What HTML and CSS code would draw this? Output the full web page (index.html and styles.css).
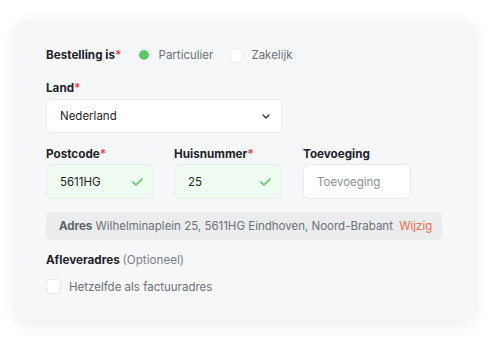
FILE: index.html
```html
<!DOCTYPE html>
<html lang="nl">
<head>
  <meta charset="UTF-8" />
  <title>Bestelling</title>
  <link rel="stylesheet" href="styles.css">
</head>
<body>

<div class="card">
  <!--  TYPE  -->
  <div class="type-row">
    <span class="label">Bestelling is<span class="req">*</span></span>
    <label class="radio"><span class="dot on"></span>Particulier</label>
    <label class="radio"><span class="dot"></span>Zakelijk</label>
  </div>

  <!--  LAND  -->
  <div class="field land">
    <span class="label">Land<span class="req">*</span></span>
    <div class="select">
      <span>Nederland</span>
      <svg width="8" height="5" viewBox="0 0 8 5"><path d="M1 1l3 3 3-3" fill="none" stroke="#333" stroke-width="1.4" stroke-linecap="round" stroke-linejoin="round"/></svg>
    </div>
  </div>

  <!--  POSTCODE / HUISNUMMER / TOEVOEGING  -->
  <div class="addr-row">
    <div class="field">
      <span class="label">Postcode<span class="req">*</span></span>
      <div class="input valid"><span>5611HG</span><svg width="11" height="8" viewBox="0 0 11 8"><path d="M1 4.2l2.9 2.8L10 1" fill="none" stroke="#5cc46b" stroke-width="1.7" stroke-linecap="round" stroke-linejoin="round"/></svg></div>
    </div>
    <div class="field">
      <span class="label">Huisnummer<span class="req">*</span></span>
      <div class="input valid"><span>25</span><svg width="11" height="8" viewBox="0 0 11 8"><path d="M1 4.2l2.9 2.8L10 1" fill="none" stroke="#5cc46b" stroke-width="1.7" stroke-linecap="round" stroke-linejoin="round"/></svg></div>
    </div>
    <div class="field">
      <span class="label">Toevoeging</span>
      <div class="input"><span class="placeholder">Toevoeging</span></div>
    </div>
  </div>

  <!--  ADRES  -->
  <div class="adres">
    <b>Adres</b> Wilhelminaplein 25, 5611HG Eindhoven, Noord-Brabant <a class="edit">Wijzig</a>
  </div>

  <!--  AFLEVERADRES  -->
  <div class="label deliver">Afleveradres <span class="opt">(Optioneel)</span></div>
  <label class="check"><span class="box"></span>Hetzelfde als factuuradres</label>
</div>

</body>
</html>
```

FILE: styles.css
```css
/* ----------  GLOBAL  ---------- */
*{box-sizing:border-box}
html,body{margin:0;padding:0}
body{background:#fff;font-family:Inter,"Noto Sans",sans-serif;color:#1f2329;padding:20px 25px 20px 15px}

/* ----------  CARD  ---------- */
.card{width:460px;height:300px;background:#f6f7f9;border-radius:12px;padding:25px 31px 0;box-shadow:0 4px 16px rgba(0,0,0,.08)}
.label{font-size:11.7px;font-weight:700;color:#1f2329;line-height:16px}
.req{color:#ef4444}

/* ----------  TYPE RADIOS  ---------- */
.type-row{display:flex;align-items:center;height:20px}
.type-row .label{margin-right:15px}
.radio{display:flex;align-items:center;font-size:11.5px;color:#6b7078;margin-right:16px}
.dot{width:15px;height:15px;border-radius:50%;background:#fff;border:1px solid #e6e8eb;margin-right:7px;display:flex;align-items:center;justify-content:center}
.dot.on::after{content:"";width:10px;height:10px;border-radius:50%;background:#62c66f}

/* ----------  FIELDS  ---------- */
.field{display:flex;flex-direction:column}
.field.land{margin-top:15px;gap:3px}
.select,.input{display:flex;align-items:center;justify-content:space-between;background:#fff;border:1px solid #e8eaed;border-radius:6px;font-size:11.5px;color:#1f2329;padding:0 11px 0 13px}
.select{width:236px;height:34px}
.addr-row{display:flex;gap:20px;margin-top:13px}
.addr-row .field{gap:2px}
.addr-row .field:nth-child(3){margin-left:1px}
.input{width:108px;height:35px;padding-right:10px}
.input.valid{background:#effaf0;border-color:#e3f0e4}
.placeholder{color:#8a8f96}

/* ----------  ADRES  ---------- */
.adres{width:396px;height:28px;margin-top:13px;background:#ebecee;border-radius:5px;font-size:11.5px;color:#6b7078;display:flex;align-items:center;padding:0 12px 0 13px;white-space:pre}
.adres b{color:#5d6168}
.edit{color:#f06a3d;margin-left:3px}

/* ----------  AFLEVERADRES  ---------- */
.deliver{margin-top:12px}
.opt{font-weight:400;color:#7a7f86}
.check{display:flex;align-items:center;margin-top:11px;font-size:11.5px;color:#6b7078}
.box{width:15px;height:15px;background:#fff;border:1px solid #e6e8eb;border-radius:3px;margin-right:8px}
```
